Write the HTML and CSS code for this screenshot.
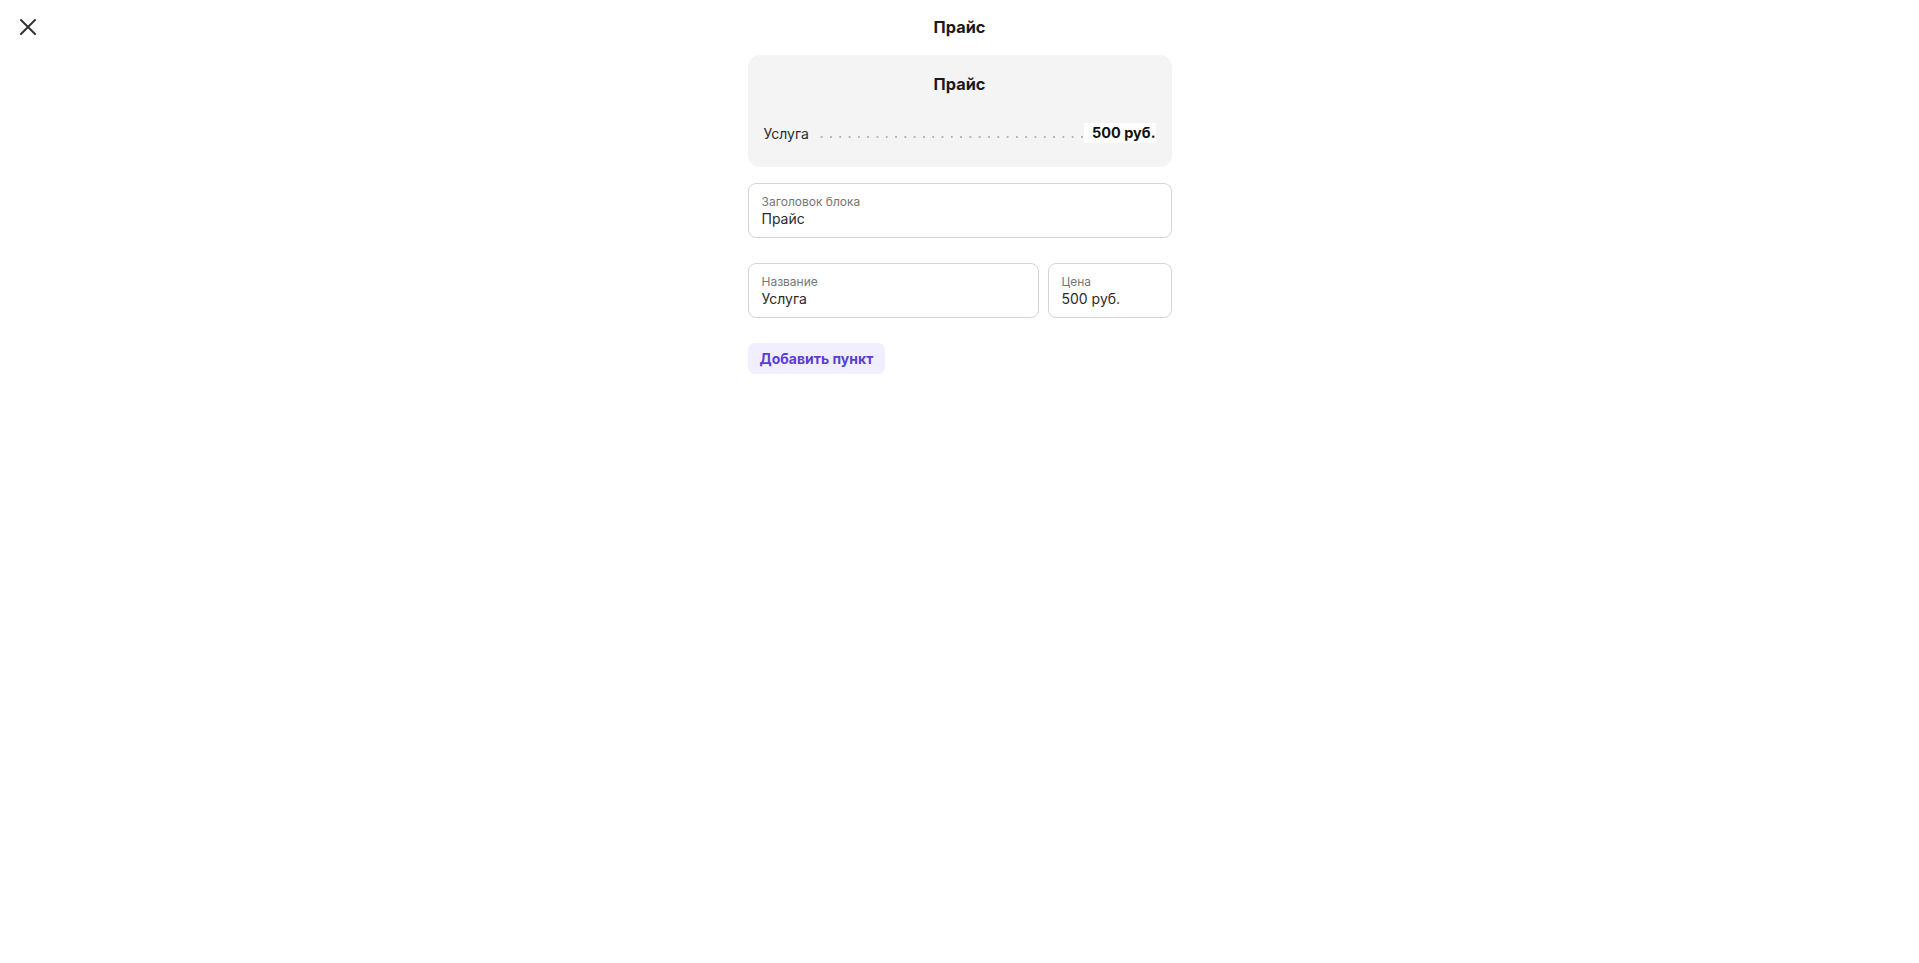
FILE: index.html
```html
<!DOCTYPE html>
<html lang="ru">

<head>
    <meta charset="UTF-8" />
    <meta name="viewport" content="width=device-width, initial-scale=1.0" />
    <title>Прайс</title>
    <link rel="stylesheet" href="styles.css">
</head>

<body>
    <header class="top-bar">
        <button class="close-btn" aria-label="Закрыть">
            <svg width="16" height="16" viewBox="0 0 16 16">
                <path d="M1 1 L15 15 M15 1 L1 15" stroke="#333" stroke-width="2" stroke-linecap="round" fill="none" />
            </svg>
        </button>
        <h1 class="page-title">Прайс</h1>
        <div></div>
    </header>

    <main class="editor">
        <div class="preview-card">
            <h2 class="preview-title">Прайс</h2>
            <div class="price-row">
                <span class="price-name">Услуга</span>
                <span class="price-leader"></span>
                <span class="price-value">500 руб.</span>
            </div>
        </div>

        <label class="field">
            <span class="field-label">Заголовок блока</span>
            <span class="field-value">Прайс</span>
        </label>

        <div class="item-row">
            <label class="field">
                <span class="field-label">Название</span>
                <span class="field-value">Услуга</span>
            </label>
            <label class="field">
                <span class="field-label">Цена</span>
                <span class="field-value">500 руб.</span>
            </label>
        </div>

        <button class="add-btn">Добавить пункт</button>
    </main>
</body>

</html>
```

FILE: styles.css
```css
body {
    margin: 0;
    font-family: Inter, "Noto Sans", sans-serif;
    color: #1a1a1a;
    background: #ffffff;
}

.top-bar {
    display: grid;
    grid-template-columns: 1fr auto 1fr;
    align-items: center;
    height: 55px;
}

.close-btn {
    justify-self: start;
    display: flex;
    align-items: center;
    justify-content: center;
    width: 16px;
    height: 16px;
    margin: 0 0 1px 20px;
    padding: 0;
    border: none;
    background: none;
    cursor: pointer;
}

.page-title {
    margin: 0 0 1px;
    font-size: 16.3px;
    font-weight: 700;
    line-height: 24px;
}

.editor {
    width: 424px;
    margin: 0 auto;
    display: flex;
    flex-direction: column;
    align-items: stretch;
}

.preview-card {
    background: #f4f4f4;
    border-radius: 12px;
    padding: 16px 16px 24px;
    margin-bottom: 16px;
}

.preview-title {
    margin: 0 0 26px;
    text-align: center;
    font-size: 16.3px;
    font-weight: 700;
    line-height: 26px;
}

.price-row {
    display: flex;
    align-items: center;
    height: 20px;
    font-size: 14px;
}

.price-name {
    color: #2b2b2b;
    padding-right: 8px;
}

.price-leader {
    flex: 1;
    align-self: flex-end;
    height: 6px;
    margin-bottom: 3px;
    background-image: radial-gradient(circle, #b5b5b5 0.9px, transparent 1.2px);
    background-size: 9.3px 6px;
    background-position: left center;
}

.price-value {
    background: #ffffff;
    font-size: 14.5px;
    font-weight: 700;
    line-height: 20px;
    padding-left: 8px;
    color: #111;
}

.field {
    display: flex;
    flex-direction: column;
    box-sizing: border-box;
    height: 55px;
    padding: 10px 13px 8px;
    border: 1px solid #d5d5d5;
    border-radius: 8px;
    background: #fff;
}

.field-label {
    font-size: 12px;
    line-height: 16px;
    color: #767676;
}

.field-value {
    font-size: 14px;
    line-height: 18px;
    color: #2b2b2b;
}

.item-row {
    display: grid;
    grid-template-columns: 1fr 124px;
    gap: 9px;
    margin-top: 25px;
}

.add-btn {
    align-self: flex-start;
    margin-top: 25px;
    height: 31px;
    padding: 0 12px;
    border: none;
    border-radius: 7px;
    background: #f1efff;
    color: #5a3fcf;
    font-family: Inter, "Noto Sans", sans-serif;
    font-size: 14px;
    font-weight: 700;
    cursor: pointer;
}
```
